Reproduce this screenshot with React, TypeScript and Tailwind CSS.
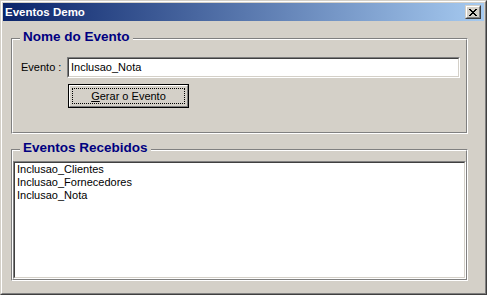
import React from "react";

const face = "bg-[#d4d0c8]";

// X glyph of the caption close button, drawn pixel by pixel
const closeRows = ["11000011", "01100110", "00111100", "00011000", "00111100", "01100110", "11000011"];

function CloseGlyph() {
  return (
    <svg width="8" height="7" viewBox="0 0 8 7" shapeRendering="crispEdges">
      {closeRows.map((row, y) =>
        row.split("").map((c, x) =>
          c === "1" ? <rect key={`${x}-${y}`} x={x} y={y} width="1" height="1" fill="#000" /> : null
        )
      )}
    </svg>
  );
}

function CloseButton() {
  return (
    <div className="mr-[3px] w-[16px] h-[14px] border border-t-[#d4d0c8] border-l-[#d4d0c8] border-b-[#404040] border-r-[#404040]">
      <div className={`w-full h-full ${face} border border-t-white border-l-white border-b-[#808080] border-r-[#808080] flex items-center justify-center`}>
        <CloseGlyph />
      </div>
    </div>
  );
}

// sunken 2px field (edit / listbox)
function Sunken({ className, children }: { className?: string; children?: React.ReactNode }) {
  return (
    <div className={`border border-t-[#808080] border-l-[#808080] border-b-white border-r-white ${className ?? ""}`}>
      <div className="w-full h-full bg-white border border-t-[#404040] border-l-[#404040] border-b-[#d4d0c8] border-r-[#d4d0c8]">
        {children}
      </div>
    </div>
  );
}

function GroupBox({ title, className, children }: { title: string; className?: string; children?: React.ReactNode }) {
  return (
    <div className={`relative border border-t-[#808080] border-l-[#808080] border-b-white border-r-white ${className ?? ""}`}>
      <div className="w-full h-full flex flex-col border border-t-white border-l-white border-b-[#808080] border-r-[#808080]">
        {children}
      </div>
      <span
        className={`absolute left-[8px] top-[-10px] px-[3px] ${face} text-[#000080] font-bold text-[13.5px] leading-[16px]`}
      >
        {title}
      </span>
    </div>
  );
}

export default function App() {
  const received = ["Inclusao_Clientes", "Inclusao_Fornecedores", "Inclusao_Nota"];

  return (
    <div
      className={`w-[487px] h-[295px] ${face} border border-t-[#d4d0c8] border-l-[#d4d0c8] border-b-[#404040] border-r-[#404040] text-[11px] text-black`}
      style={{ fontFamily: '"Liberation Sans", Arial, sans-serif' }}
    >
      <div className="w-full h-full p-[1px] flex flex-col border border-t-white border-l-white border-b-[#808080] border-r-[#808080]">
        {/* caption */}
        <div className="h-[18px] shrink-0 flex items-center justify-between bg-[linear-gradient(to_right,#0a246a,#a6caf0)]">
          <span className="pl-[2px] text-white font-bold text-[11.5px] leading-[18px]">Eventos Demo</span>
          <CloseButton />
        </div>

        {/* client area */}
        <div className="flex flex-col pl-[8px] pt-[17px]">
          <GroupBox title="Nome do Evento" className="w-[457px] h-[96px]">
            <div className="flex items-center mt-[17px] pl-[8px]">
              <span className="w-[46px] leading-[13px]">Evento :</span>
              <Sunken className="w-[393px] h-[21px]">
                <div className="pl-[2px] h-full flex items-center leading-[13px]">Inclusao_Nota</div>
              </Sunken>
            </div>
            <div className="mt-[6px] ml-[55px]">
              <div className="w-[121px] h-[24px] border border-black">
                <div className={`w-full h-full ${face} border border-t-white border-l-white border-b-[#808080] border-r-[#808080] p-[2px]`}>
                  <div className="w-full h-full border border-dotted border-black flex items-center justify-center leading-[13px]">
                    <span>
                      <span className="underline underline-offset-1">G</span>erar o Evento
                    </span>
                  </div>
                </div>
              </div>
            </div>
          </GroupBox>

          <GroupBox title="Eventos Recebidos" className="w-[457px] h-[132px] mt-[15px]">
            <div className="flex-1 flex flex-col pt-[10px]">
              <Sunken className="flex-1">
                <div className="pl-[2px] flex flex-col">
                  {received.map((name) => (
                    <div key={name} className="leading-[13px]">
                      {name}
                    </div>
                  ))}
                </div>
              </Sunken>
            </div>
          </GroupBox>
        </div>
      </div>
    </div>
  );
}
